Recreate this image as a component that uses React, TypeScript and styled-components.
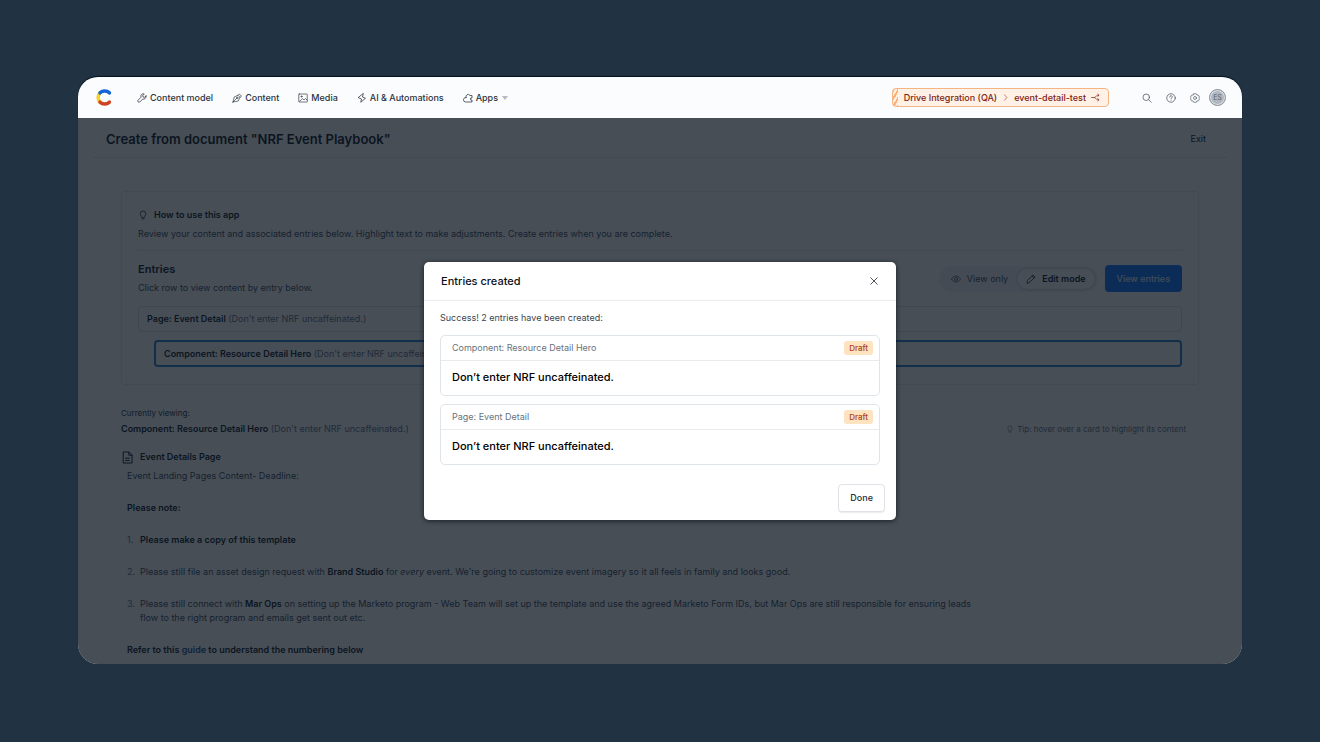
import React from "react";
import styled, { createGlobalStyle, css } from "styled-components";

const GlobalStyle = createGlobalStyle`
  *, *::before, *::after { box-sizing: border-box; }
  html, body, #root { height: 100%; }
  body {
    margin: 0;
    background: #213343;
    color: #111b2b;
    font-family: Inter, "Liberation Sans", sans-serif;
    font-size: 9px;
    line-height: 14px;
  }
  h1, h2, h3, p, ol, ul { margin: 0; padding: 0; font: inherit; }
  ol, ul { list-style: none; }
  button { font: inherit; color: inherit; border: 0; background: none; padding: 0; cursor: pointer; }
  a { color: inherit; text-decoration: none; }
  svg { display: block; flex: none; }
`;

const Stage = styled.div`
  height: 100%;
  padding: 77px 78px 78px;
  display: flex;
`;

const Window = styled.div`
  flex: 1;
  min-width: 0;
  display: flex;
  flex-direction: column;
  border-radius: 20px;
  overflow: hidden;
  box-shadow: 0 -1px 1px 0 #04101c;
`;

const TopBar = styled.header`
  display: flex;
  align-items: center;
  flex: none;
  height: 41px;
  padding: 0 16px 0 17px;
  background: #fafcfd;
  color: #2b333d;
`;

const Nav = styled.nav`
  display: flex;
  gap: 19px;
  margin-left: 23px;
  flex: 1;
`;

const NavLink = styled.a`
  display: flex;
  align-items: center;
  gap: 3px;
  font-weight: 500;
`;

const Environment = styled.button`
  display: flex;
  align-items: center;
  gap: 5px;
  height: 19px;
  padding: 0 8px 0 11px;
  border: 1px solid #f3b583;
  border-radius: 4px;
  background: repeating-linear-gradient(120deg, #f9b27c 0 2px, #fff0e2 2px 4px) left / 5px 100% no-repeat, #fff1e5;
  color: #7d2316;
  font-weight: 500;
`;

const Tools = styled.div`
  display: flex;
  align-items: center;
  gap: 14px;
  margin-left: 33px;
  color: #4c5560;
`;

const Avatar = styled.button`
  width: 17px;
  height: 17px;
  margin-left: -5px;
  border: 1px solid #8a929b;
  border-radius: 50%;
  background: #b0b7be;
  box-shadow: inset 0 0 0 1px #dfe3e7;
  color: #5d6670;
  font-size: 7px;
  line-height: 15px;
`;

const Body = styled.div`
  position: relative;
  flex: 1;
  min-height: 0;
  overflow: hidden;
  background: #fff;
`;

const Heading = styled.div`
  display: flex;
  align-items: center;
  justify-content: space-between;
  height: 40px;
  margin: 0 14px;
  padding: 2px 22px 0 14px;
  border-bottom: 1px solid #e7ebee;
`;

const PageTitle = styled.h1`
  font-size: 13px;
  line-height: 18px;
  font-weight: 600;
`;

const Content = styled.main`
  padding: 33px 43px 0;
`;

const Panel = styled.section`
  padding: 16px 16px 17px;
  border: 1px solid #e7ebee;
  border-radius: 3px;
`;

const Line = styled.div<{ $gap?: number }>`
  display: flex;
  align-items: center;
  gap: ${(p) => p.$gap ?? 0}px;
`;

const Strong = styled.strong`
  font-weight: 600;
  color: #111b2b;
`;

const SubHeading = styled.h2`
  font-size: 9px;
  font-weight: 600;
`;

const Muted = styled.p`
  color: #414d63;
`;

const Intro = styled(Muted)`
  margin-top: 5px;
  padding-bottom: 9px;
  border-bottom: 1px solid #e7ebee;
`;

const EntriesBar = styled.div`
  display: flex;
  align-items: center;
  justify-content: space-between;
  margin-top: 11px;
`;

const EntriesTitle = styled.h2`
  margin-bottom: 5px;
  font-size: 11px;
  line-height: 14px;
  font-weight: 600;
`;

const Segmented = styled.div`
  display: flex;
  padding: 3px;
  border-radius: 14px;
  background: #f2f4f6;
`;

const Segment = styled.button<{ $active?: boolean }>`
  display: flex;
  align-items: center;
  gap: 6px;
  height: 20px;
  padding: 0 9px;
  border-radius: 10px;
  color: #414d63;
  ${(p) =>
    p.$active &&
    css`
      background: #fff;
      box-shadow: 0 0 2px 0 #98a2ae;
      color: #111b2b;
      font-weight: 600;
    `}
`;

const Primary = styled.button`
  height: 27px;
  padding: 0 12px;
  border-radius: 4px;
  background: #127aff;
  color: #e4eefc;
  font-weight: 500;
`;

const EntryRow = styled.button<{ $selected?: boolean }>`
  display: block;
  width: ${(p) => (p.$selected ? "calc(100% - 16px)" : "100%")};
  height: ${(p) => (p.$selected ? 27 : 26)}px;
  margin: ${(p) => (p.$selected ? "8px 0 0 16px" : "11px 0 0")};
  padding: 0 8px;
  border: ${(p) => (p.$selected ? "2px solid #2a7fd0" : "1px solid #dce1e6")};
  border-radius: 4px;
  color: #67728a;
  text-align: left;
  white-space: nowrap;
`;

const Viewing = styled.div`
  display: flex;
  align-items: flex-end;
  justify-content: space-between;
  margin-top: 21px;
  padding-right: 13px;
  color: #67728a;
`;

const Label = styled.p`
  margin-bottom: 2px;
  font-size: 8px;
  color: #29354a;
`;

const Tip = styled.p`
  display: flex;
  align-items: center;
  gap: 3px;
  font-size: 8px;
  color: #67728a;
`;

const DocTitle = styled(Line)`
  margin: 14px 0 5px;
`;

const Document = styled.article`
  max-width: 870px;
  padding-left: 6px;
  color: #414d63;

  > * + * {
    margin-top: 18px;
  }
`;

const Steps = styled.ol`
  display: flex;
  flex-direction: column;
  gap: 18px;
  counter-reset: step;
`;

const Step = styled.li`
  display: grid;
  grid-template-columns: 13px 1fr;
  counter-increment: step;

  &::before {
    content: counter(step) ".";
    color: #67728a;
  }
`;

const GuideLink = styled.a`
  color: #1f4f94;
`;

const Overlay = styled.div`
  position: absolute;
  inset: 0;
  display: flex;
  align-items: center;
  justify-content: center;
  background: rgba(10, 19, 29, 0.75);
`;

const Dialog = styled.div`
  width: 472px;
  max-width: 100%;
  border-radius: 5px;
  background: #fff;
  box-shadow: 0 1px 5px rgba(5, 10, 16, 0.7);
`;

const DialogHeader = styled.div`
  display: flex;
  align-items: center;
  justify-content: space-between;
  height: 39px;
  padding: 0 17px;
  border-bottom: 1px solid #e9edf0;
`;

const DialogTitle = styled.h2`
  font-size: 11px;
  font-weight: 500;
  color: #0b1017;
`;

const DialogBody = styled.div`
  padding: 10px 16px 0;
  color: #3b4450;
`;

const Cards = styled.ul`
  display: flex;
  flex-direction: column;
  gap: 8px;
  margin-top: 10px;
`;

const Card = styled.li`
  border: 1px solid #dfe4e8;
  border-radius: 5px;
`;

const CardHeader = styled.div`
  display: flex;
  align-items: center;
  justify-content: space-between;
  height: 25px;
  padding: 0 6px 0 11px;
  border-bottom: 1px solid #e7ebee;
  color: #69727d;
`;

const Badge = styled.span`
  padding: 0 5px;
  border-radius: 3px;
  background: #fde3bf;
  color: #b0401a;
  font-size: 8px;
  font-weight: 500;
`;

const CardTitle = styled.h3`
  padding: 9px 11px 11px;
  font-size: 11px;
  font-weight: 500;
  color: #000;
`;

const DialogFooter = styled.div`
  display: flex;
  justify-content: flex-end;
  padding: 19px 11px 8px;
`;

const Secondary = styled.button`
  height: 28px;
  padding: 0 11px;
  border: 1px solid #dfe3e7;
  border-radius: 4px;
  background: #fff;
  box-shadow: 0 1px 1px rgba(20, 30, 40, 0.08);
  color: #252d37;
  font-weight: 500;
`;

type IconProps = { size?: number; width?: number; children: React.ReactNode };
const Icon = ({ size = 10, width = 1.5, children }: IconProps) => (
  <svg
    width={size}
    height={size}
    viewBox="0 0 20 20"
    fill="none"
    stroke="currentColor"
    strokeWidth={width}
    strokeLinecap="round"
    strokeLinejoin="round"
    aria-hidden="true"
  >
    {children}
  </svg>
);

const Logo = () => (
  <svg width="19" height="19" viewBox="0 0 18 18" fill="none" strokeWidth="3.4" aria-label="Home" role="img">
    <path d="M4.800 4.600a6.200 6.200 0 0 0 0 8.800" stroke="#fbd02d" />
    <path d="M4.800 4.600a6.200 6.200 0 0 1 8.800 0" stroke="#1464d8" strokeLinecap="round" />
    <path d="M4.800 13.400a6.200 6.200 0 0 0 8.800 0" stroke="#cf4420" strokeLinecap="round" />
  </svg>
);

const Wrench = () => (
  <Icon><path d="M18 6l-3 2.500-3-.5-.5-3L14.500 2a5 5 0 0 0-6.500 6.500l-6 6a2.500 2.500 0 0 0 3.500 3.500l6-6A5 5 0 0 0 18 6z" /></Icon>
);
const Pen = () => (
  <Icon width={1.3}><path d="M2 18l2.500-10L12 4.500l4 4L12.500 16 2 18zM2 18l7-7M12 4.500L14.500 2 19 6.500 16 8.500" /><circle cx="10.200" cy="9.800" r="1.600" /></Icon>
);
const Picture = () => (
  <Icon width={1.3}><rect x="1.500" y="2" width="17" height="16" rx="1" /><path d="M3 17l6-6 3 3 3-3 3.500 3.500" /><circle cx="7" cy="7" r="1.200" /></Icon>
);
const Bolt = () => (
  <Icon><path d="M12.500 1.500L11 8l6 2.500L7.500 18.500 9 12 3 9.500z" /></Icon>
);
const Puzzle = () => (
  <Icon><path d="M6 9a4.500 4.500 0 0 1 8-4h4v5a2.200 2.200 0 1 0 0 4v4H5a4.500 4.500 0 0 1 1-9z" /></Icon>
);
const Gear = () => (
  <Icon width={1.3}>
    <path d="M7.500 1.500h5l1.300 2.600 3 .1 2.400 4.300L17.500 10l1.700 1.500-2.400 4.300-3 .1-1.300 2.600h-5l-1.300-2.600-3-.1L.8 11.500 2.500 10 .8 8.500l2.400-4.300 3-.1z" />
    <circle cx="10" cy="10" r="3" />
  </Icon>
);
const Bulb = ({ size = 10 }: { size?: number }) => (
  <Icon size={size}><path d="M7.500 14.500c0-2-3-3.500-3-7a5.500 5.500 0 0 1 11 0c0 3.500-3 5-3 7zM8 18h4" /></Icon>
);

const navItems = [
  { label: "Content model", icon: <Wrench /> },
  { label: "Content", icon: <Pen /> },
  { label: "Media", icon: <Picture /> },
  { label: "AI & Automations", icon: <Bolt /> },
];

const created = ["Component: Resource Detail Hero", "Page: Event Detail"];

export default function App() {
  return (
    <>
      <GlobalStyle />
      <Stage>
        <Window>
          <TopBar>
            <Logo />
            <Nav aria-label="Main">
              {navItems.map((item) => (
                <NavLink href="#" key={item.label}>
                  {item.icon}
                  {item.label}
                </NavLink>
              ))}
              <NavLink href="#">
                <Puzzle />
                Apps
                <svg width="8" height="6" viewBox="0 0 8 6" fill="#b4bac0" aria-hidden="true"><path d="M1 1h6L4 5z" /></svg>
              </NavLink>
            </Nav>
            <Environment>
              Drive Integration (QA)
              <Icon size={7}><path d="M7 2l7 8-7 8" /></Icon>
              event-detail-test
              <Icon size={9}><path d="M1 10h6c4 0 4-5 8-5h2M7 10c4 0 4 5 8 5h2M15 2.500L18 5l-3 2.500M15 12.500l3 2.500-3 2.500" /></Icon>
            </Environment>
            <Tools>
              <button aria-label="Search"><Icon><circle cx="8.500" cy="8.500" r="6.500" /><path d="M13.500 13.500L18.500 18.500" /></Icon></button>
              <button aria-label="Help"><Icon><circle cx="10" cy="10" r="8.500" /><path d="M7.500 8a2.500 2.500 0 1 1 3.500 2.200c-.7.400-1 .8-1 1.500M10 14.500v.1" /></Icon></button>
              <button aria-label="Settings"><Gear /></button>
              <Avatar aria-label="Account">ES</Avatar>
            </Tools>
          </TopBar>
          <Body>
            <Heading>
              <PageTitle>Create from document "NRF Event Playbook"</PageTitle>
              <button>Exit</button>
            </Heading>
            <Content>
              <Panel>
                <Line $gap={6}>
                  <Bulb />
                  <SubHeading>How to use this app</SubHeading>
                </Line>
                <Intro>Review your content and associated entries below. Highlight text to make adjustments. Create entries when you are complete.</Intro>
                <EntriesBar>
                  <div>
                    <EntriesTitle>Entries</EntriesTitle>
                    <Muted>Click row to view content by entry below.</Muted>
                  </div>
                  <Line $gap={7}>
                    <Segmented>
                      <Segment>
                        <Icon><path d="M1 10s3-6 9-6 9 6 9 6-3 6-9 6-9-6-9-6z" /><circle cx="10" cy="10" r="3" /></Icon>
                        View only
                      </Segment>
                      <Segment $active>
                        <Icon><path d="M2 18l1-5L14 2l4 4L7 17zM12 4l4 4" /></Icon>
                        Edit mode
                      </Segment>
                    </Segmented>
                    <Primary>View entries</Primary>
                  </Line>
                </EntriesBar>
                <EntryRow>
                  <Strong>Page: Event Detail</Strong> (Don't enter NRF uncaffeinated.)
                </EntryRow>
                <EntryRow $selected>
                  <Strong>Component: Resource Detail Hero</Strong> (Don't enter NRF uncaffeinated.)
                </EntryRow>
              </Panel>
              <Viewing>
                <div>
                  <Label>Currently viewing:</Label>
                  <p><Strong>Component: Resource Detail Hero</Strong> (Don't enter NRF uncaffeinated.)</p>
                </div>
                <Tip><Bulb size={8} />Tip: hover over a card to highlight its content</Tip>
              </Viewing>
              <DocTitle $gap={6}>
                <Icon size={13}><path d="M4 1.500h8l5 5v12H4zM12 1.500v5h5M7 11h6M7 14.500h6" /></Icon>
                <SubHeading>Event Details Page</SubHeading>
              </DocTitle>
              <Document>
                <p>Event Landing Pages Content- Deadline:</p>
                <p><Strong>Please note:</Strong></p>
                <Steps>
                  <Step><Strong>Please make a copy of this template</Strong></Step>
                  <Step>
                    <p>Please still file an asset design request with <Strong>Brand Studio</Strong> for <em>every</em> event. We're going to customize event imagery so it all feels in family and looks good.</p>
                  </Step>
                  <Step>
                    <p>Please still connect with <Strong>Mar Ops</Strong> on setting up the Marketo program - Web Team will set up the template and use the agreed Marketo Form IDs, but Mar Ops are still responsible for ensuring leads flow to the right program and emails get sent out etc.</p>
                  </Step>
                </Steps>
                <p><Strong>Refer to this <GuideLink href="#">guide</GuideLink> to understand the numbering below</Strong></p>
              </Document>
            </Content>
            <Overlay>
              <Dialog role="dialog" aria-modal="true" aria-labelledby="dialog-title">
                <DialogHeader>
                  <DialogTitle id="dialog-title">Entries created</DialogTitle>
                  <button aria-label="Close"><Icon><path d="M3.500 3.500l13 13M16.500 3.500l-13 13" /></Icon></button>
                </DialogHeader>
                <DialogBody>
                  <p>Success! 2 entries have been created:</p>
                  <Cards>
                    {created.map((name) => (
                      <Card key={name}>
                        <CardHeader>{name}<Badge>Draft</Badge></CardHeader>
                        <CardTitle>Don’t enter NRF uncaffeinated.</CardTitle>
                      </Card>
                    ))}
                  </Cards>
                </DialogBody>
                <DialogFooter><Secondary>Done</Secondary></DialogFooter>
              </Dialog>
            </Overlay>
          </Body>
        </Window>
      </Stage>
    </>
  );
}
